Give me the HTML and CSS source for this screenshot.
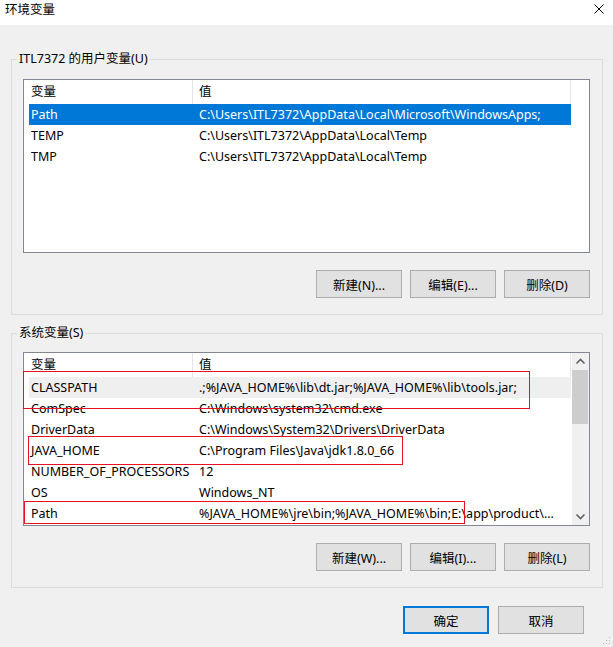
FILE: index.html
```html
<!DOCTYPE html>
<html lang="zh-CN">
<head>
  <meta charset="UTF-8" />
  <title>环境变量</title>
  <link rel="stylesheet" href="styles.css">
</head>
<body>

<div class="dialog">

  <div class="titlebar">
    <span class="title">环境变量</span>
    <svg class="close" width="10" height="10" viewBox="0 0 10 10">
      <path d="M0.5 0.5 L9.5 9.5 M9.5 0.5 L0.5 9.5" stroke="#000" stroke-width="1" fill="none" />
    </svg>
  </div>

  <fieldset class="group first">
    <legend>ITL7372 的用户变量(U)</legend>
    <div class="listbox">
      <div class="list">
        <div class="row head"><span class="c1">变量</span><span class="c2">值</span></div>
        <div class="row selected"><span class="c1">Path</span><span class="c2">C:\Users\ITL7372\AppData\Local\Microsoft\WindowsApps;</span></div>
        <div class="row"><span class="c1">TEMP</span><span class="c2">C:\Users\ITL7372\AppData\Local\Temp</span></div>
        <div class="row"><span class="c1">TMP</span><span class="c2">C:\Users\ITL7372\AppData\Local\Temp</span></div>
      </div>
    </div>
    <div class="buttons">
      <button>新建(N)...</button>
      <button>编辑(E)...</button>
      <button>删除(D)</button>
    </div>
  </fieldset>

  <fieldset class="group second">
    <legend>系统变量(S)</legend>
    <div class="listbox">
      <div class="list">
        <div class="row head"><span class="c1">变量</span><span class="c2">值</span></div>
        <div class="row hot"><span class="c1">CLASSPATH</span><span class="c2">.;%JAVA_HOME%\lib\dt.jar;%JAVA_HOME%\lib\tools.jar;</span></div>
        <div class="row"><span class="c1">ComSpec</span><span class="c2">C:\Windows\system32\cmd.exe</span></div>
        <div class="row"><span class="c1">DriverData</span><span class="c2">C:\Windows\System32\Drivers\DriverData</span></div>
        <div class="row"><span class="c1">JAVA_HOME</span><span class="c2">C:\Program Files\Java\jdk1.8.0_66</span></div>
        <div class="row"><span class="c1">NUMBER_OF_PROCESSORS</span><span class="c2">12</span></div>
        <div class="row"><span class="c1">OS</span><span class="c2">Windows_NT</span></div>
        <div class="row"><span class="c1">Path</span><span class="c2">%JAVA_HOME%\jre\bin;%JAVA_HOME%\bin;E:\app\product\...</span></div>
      </div>
      <div class="vscroll">
        <svg class="arrow" width="17" height="17" viewBox="0 0 17 17">
          <path d="M4.5 10.5 L8.5 6.5 L12.5 10.5" stroke="#606060" stroke-width="1.6" fill="none" />
        </svg>
        <div class="track"><div class="thumb"></div></div>
        <svg class="arrow" width="17" height="17" viewBox="0 0 17 17">
          <path d="M4.5 6.5 L8.5 10.5 L12.5 6.5" stroke="#606060" stroke-width="1.6" fill="none" />
        </svg>
      </div>

      <!-- red marks drawn over the list -->
      <div class="mark mark-classpath"></div>
      <div class="mark mark-javahome"></div>
      <div class="mark mark-path"></div>
    </div>
    <div class="buttons">
      <button>新建(W)...</button>
      <button>编辑(I)...</button>
      <button>删除(L)</button>
    </div>
  </fieldset>

  <div class="footer">
    <button class="default">确定</button>
    <button>取消</button>
  </div>

  <svg class="grip" width="8" height="8" viewBox="0 0 8 8">
    <rect x="6" y="0" width="1" height="1" fill="#b8b8b8" />
    <rect x="3" y="3" width="1" height="1" fill="#b8b8b8" />
    <rect x="6" y="3" width="1" height="1" fill="#b8b8b8" />
    <rect x="0" y="6" width="1" height="1" fill="#b8b8b8" />
    <rect x="3" y="6" width="1" height="1" fill="#b8b8b8" />
    <rect x="6" y="6" width="1" height="1" fill="#b8b8b8" />
  </svg>

</div>

</body>
</html>
```

FILE: styles.css
```css
html, body {
  margin: 0;
  padding: 0;
  background: #f0f0f0;
}

.dialog {
  position: relative;
  width: 613px;
  height: 647px;
  background: #f0f0f0;
  color: #000;
  font-family: "Noto Sans", "Noto Sans CJK SC", sans-serif;
  font-size: 12.5px;
  overflow: hidden;
}

.titlebar {
  height: 25px;
  background: #fff;
  display: flex;
  align-items: flex-start;
  justify-content: space-between;
  padding: 2px 9px 0 5px;
  box-sizing: border-box;
}

.title {
  line-height: 16px;
}

.close {
  margin-top: 2px;
}

.group {
  margin: 26px 10px 0 11px;
  padding: 12px 12px 16px 11px;
  border: 1px solid #dcdcdc;
  min-width: 0;
}

.group.second {
  margin-top: 10px;
  padding-top: 11px;
}

.group legend {
  line-height: 16px;
  padding: 0 2px;
  margin-left: -6px;
}

.listbox {
  position: relative;
  height: 174px;
  box-sizing: border-box;
  border: 1px solid #828790;
  background: #fff;
  display: flex;
}

.list {
  width: 542px;
  padding-left: 5px;
  flex: none;
}

.row {
  display: flex;
  height: 21px;
  line-height: 21px;
  white-space: nowrap;
}

.row .c1 {
  width: 164px;
  padding-left: 2px;
  box-sizing: border-box;
  overflow: hidden;
}

.row .c2 {
  width: 378px;
  padding-left: 6px;
  box-sizing: border-box;
  overflow: hidden;
}

.row.head {
  height: 24px;
  line-height: 24px;
}

.row.head .c1,
.row.head .c2 {
  border-right: 1px solid #e5e5e5;
}

.row.selected {
  background: #0078d7;
  color: #fff;
}

.row.hot {
  background: #efefef;
}

.vscroll {
  width: 17px;
  margin-left: 1px;
  background: #f0f0f0;
  display: flex;
  flex-direction: column;
}

.vscroll .arrow {
  display: block;
  flex: none;
}

.vscroll .track {
  flex: 1;
}

.vscroll .thumb {
  height: 54px;
  margin: 0 1px 0 0;
  background: #cdcdcd;
}

.mark {
  position: absolute;
  z-index: 2;
  border: 1px solid #e81123;
  pointer-events: none;
}

.mark-classpath {
  left: -1px;
  top: 18px;
  width: 505px;
  height: 36px;
}

.mark-javahome {
  left: 4px;
  top: 83px;
  width: 373px;
  height: 27px;
}

.mark-path {
  left: 0;
  top: 148px;
  width: 439px;
  height: 21px;
}

.buttons {
  display: flex;
  justify-content: flex-end;
  gap: 8px;
  margin-top: 17px;
}

button {
  width: 86px;
  height: 28px;
  box-sizing: border-box;
  background: #e1e1e1;
  border: 1px solid #adadad;
  border-radius: 0;
  padding: 0;
  font-family: inherit;
  font-size: 12.5px;
  color: #000;
}

.footer {
  display: flex;
  justify-content: flex-end;
  gap: 9px;
  margin-top: 18px;
  padding-right: 29px;
}

.footer .default {
  border: 2px solid #0078d7;
}

.grip {
  position: absolute;
  right: 2px;
  bottom: 2px;
}
```
